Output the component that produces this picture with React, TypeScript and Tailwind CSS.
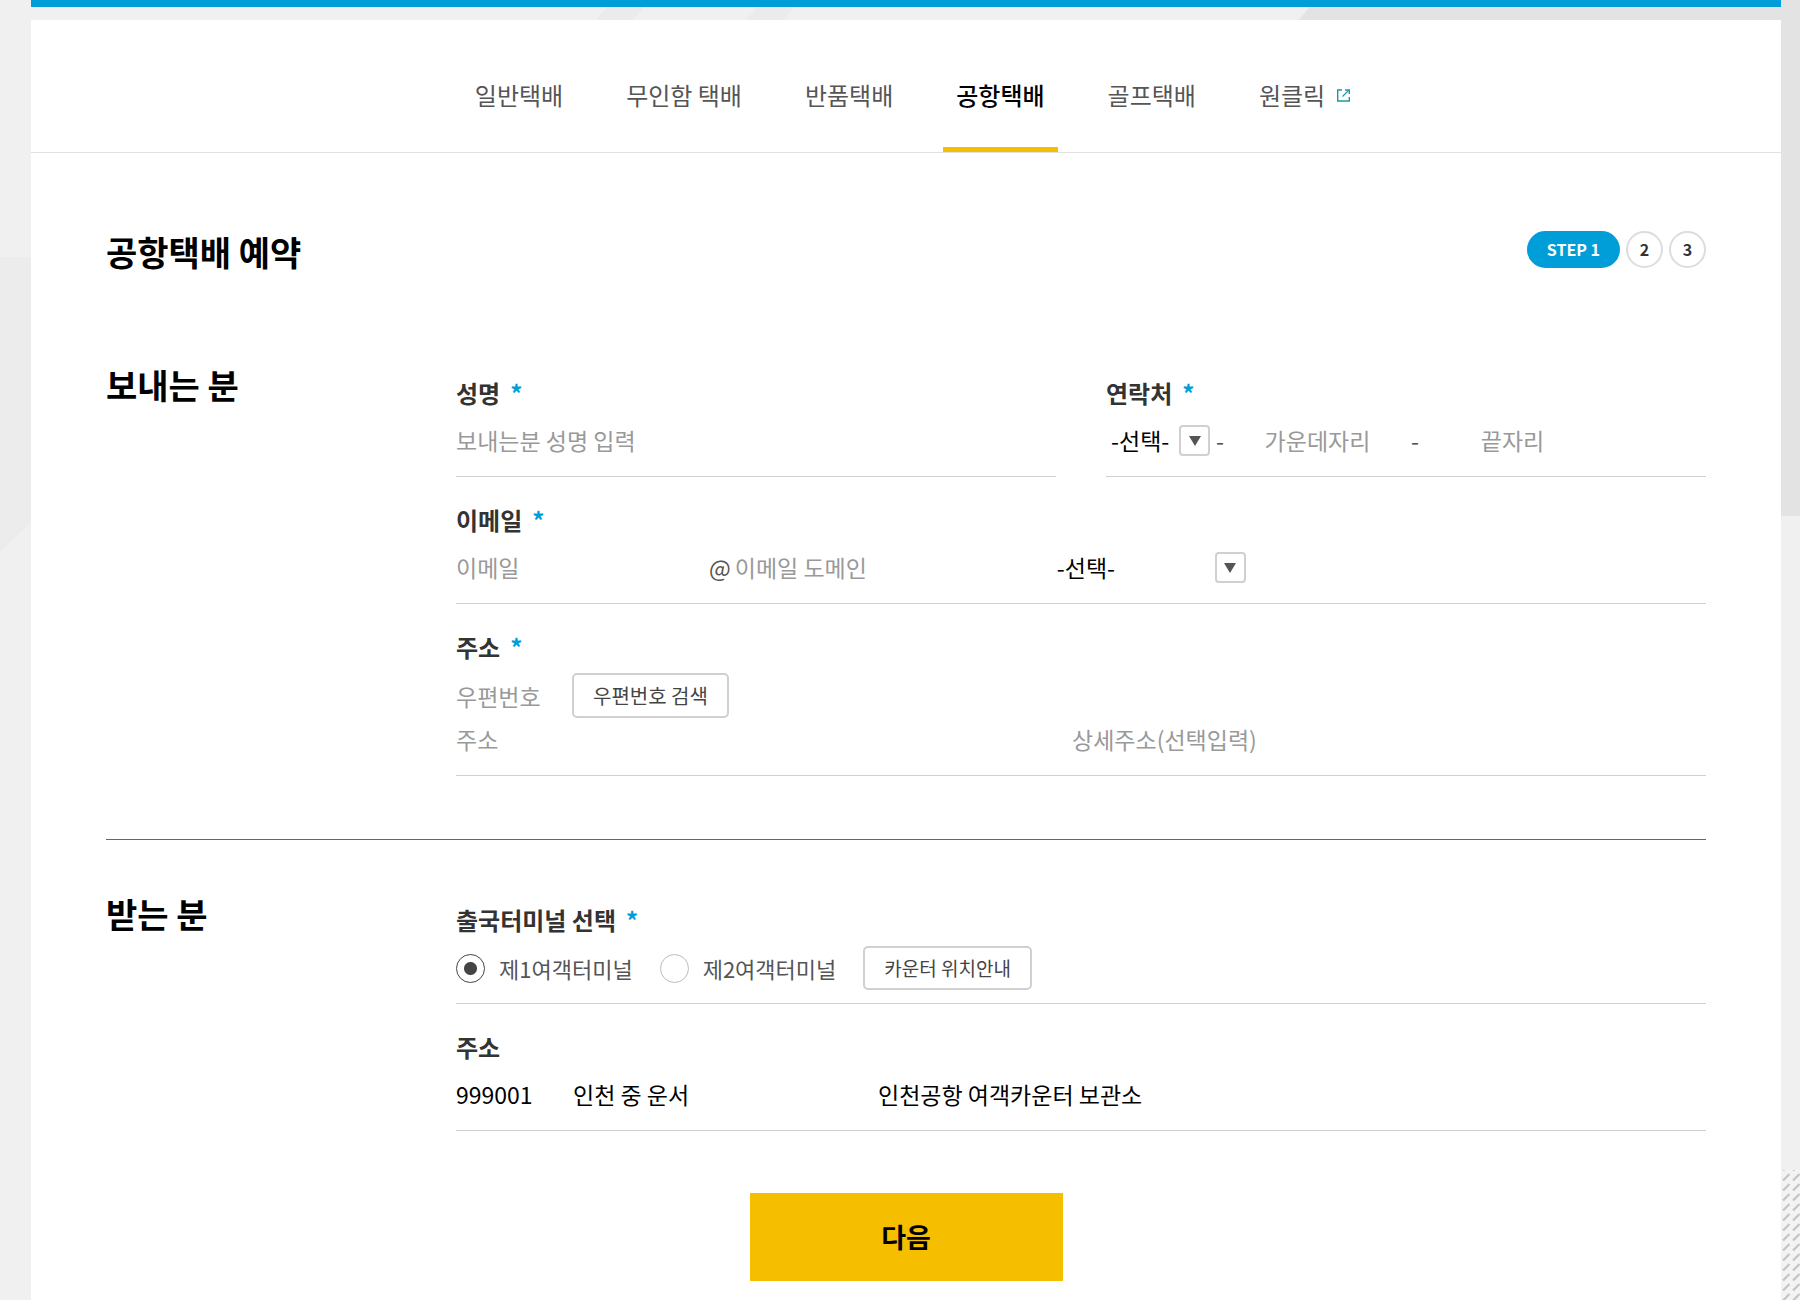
import React from 'react';

const tabs = ['일반택배', '무인함 택배', '반품택배', '공항택배', '골프택배'];

const inputClass =
  'min-w-0 bg-transparent text-[23px] leading-8 text-black placeholder:text-[#999] outline-none';

const outlineButtonClass = 'shrink-0 rounded-[5px] border-2 border-[#d0d0d0] bg-white px-[19px] text-[#444]';

const radioClass =
  'h-[29px] w-[29px] appearance-none rounded-full border border-[#bbb] checked:border-[#444] checked:bg-[radial-gradient(circle,#444_0_6px,transparent_7px)]';

const rowClass = 'border-b border-[#d0d0d0]';

const Backdrop: React.FC = () => (
  <svg className="absolute inset-0 -z-10 h-full w-full" aria-hidden="true">
    <defs>
      <pattern id="hatch" x="1781" y="1171" width="10" height="10" patternUnits="userSpaceOnUse">
        <rect width="10" height="10" fill="#f3f3f3" />
        <path d="M2 9.5 L8.5 3" stroke="#c4c4c4" strokeWidth="2.2" />
      </pattern>
    </defs>
    <path d="M0 257 H31 V522 L0 552 Z" fill="#ececec" />
    <path d="M610 4 H647 L631 22 H594 Z" fill="#ebebeb" />
    <path d="M760 4 H798 L781 22 H744 Z" fill="#ebebeb" />
    <path d="M1312 4 L1316 0 H1800 V516 H1700 V22 H1297 Z" fill="#e3e3e3" />
    <rect x="1700" y="1170" width="100" height="130" fill="url(#hatch)" />
  </svg>
);

const ExternalIcon: React.FC = () => (
  <svg className="h-[13px] w-[13px]" viewBox="0 0 13 13" fill="none" stroke="#1f98a3" aria-hidden="true">
    <path d="M5 1 H0.7 V12 H12.3 V8" strokeWidth="1.4" />
    <path d="M8 1 H12.3 V5" strokeWidth="1.4" />
    <path d="M5.5 7.5 L11.5 1.5" strokeWidth="1.1" />
  </svg>
);

const ArrowBox: React.FC = () => (
  <span className="pointer-events-none absolute right-0 top-px flex h-[31px] w-[31px] items-center justify-center rounded-[4px] border-2 border-[#d0d0d0]">
    <svg width="12" height="10" viewBox="0 0 12 10" aria-hidden="true">
      <path d="M0 0 H12 L6 10 Z" fill="#555" />
    </svg>
  </span>
);

interface FieldLabelProps {
  htmlFor: string;
  required?: boolean;
  children: React.ReactNode;
}

const FieldLabel: React.FC<FieldLabelProps> = ({ htmlFor, required, children }) => (
  <label htmlFor={htmlFor} className="block text-2xl font-bold text-[#333]">
    {children}
    {required && <span className="ml-[10px] text-[#009ed9]">*</span>}
  </label>
);

const App: React.FC = () => {
  return (
    <div className="relative isolate flex min-h-screen flex-col bg-[#f0f0f0] pl-[31px] pr-[19px] font-['Noto_Sans_CJK_KR',sans-serif]">
      <Backdrop />
      <div className="h-[7px] bg-[#009ed9]"></div>

      <div className="mt-[13px] flex-1 bg-white">
        <nav className="flex h-[133px] justify-center gap-[37px] border-b border-[#e2e2e2] text-2xl text-[#555]">
          {tabs.map((tab) => (
            <a
              key={tab}
              href="#"
              className={
                tab === '공항택배'
                  ? 'flex items-center border-y-[5px] border-t-transparent border-b-[#f5bf00] px-[13px] pt-[18px] font-medium text-black'
                  : 'flex items-center border-y-[5px] border-transparent px-[13px] pt-[18px]'
              }
            >
              {tab}
            </a>
          ))}
          <a href="#" className="flex items-center gap-3 border-y-[5px] border-transparent pl-[13px] pt-[18px]">
            원클릭
            <ExternalIcon />
          </a>
        </nav>

        <form className="px-[75px] pb-4 pt-[74px]">
          <header className="flex items-start justify-between">
            <h1 className="text-[34px] font-bold leading-[50px] text-black">공항택배 예약</h1>
            <ol className="mt-1 flex gap-[6px] text-base leading-[33px] font-bold text-[#333]">
              <li className="h-[37px] rounded-full border-2 border-[#009ed9] bg-[#009ed9] px-[18px] text-white">STEP 1</li>
              <li className="h-[37px] w-[37px] rounded-full border-2 border-[#ddd] text-center">2</li>
              <li className="h-[37px] w-[37px] rounded-full border-2 border-[#ddd] text-center">3</li>
            </ol>
          </header>

          <section className="mt-[83px] flex border-b border-[#666] pb-[63px]">
            <h2 className="w-[350px] shrink-0 text-[34px] font-bold leading-[50px] text-black">보내는 분</h2>
            <div className="min-w-0 flex-1 pt-[17px]">
              <div className="flex gap-[50px]">
                <div className={`${rowClass} h-[100px] flex-1`}>
                  <FieldLabel htmlFor="sender" required>성명</FieldLabel>
                  <input id="sender" className={`${inputClass} mt-[15px] w-full`} placeholder="보내는분 성명 입력" />
                </div>
                <div className={`${rowClass} h-[100px] flex-1`}>
                  <FieldLabel htmlFor="phone1" required>연락처</FieldLabel>
                  <div className="mt-[15px] flex items-center text-[23px] leading-8 text-[#555]">
                    <div className="relative w-[104px]">
                      <select id="phone1" className="w-full appearance-none pl-[5px] text-black outline-none">
                        <option>-선택-</option>
                      </select>
                      <ArrowBox />
                    </div>
                    <span className="ml-[6px]">-</span>
                    <input aria-label="가운데자리" className={`${inputClass} w-[187px] text-center`} placeholder="가운데자리" />
                    <span>-</span>
                    <input aria-label="끝자리" className={`${inputClass} w-[187px] text-center`} placeholder="끝자리" />
                  </div>
                </div>
              </div>

              <div className={`${rowClass} mt-[27px] h-[100px]`}>
                <FieldLabel htmlFor="email" required>이메일</FieldLabel>
                <div className="mt-[15px] flex items-center text-[23px] leading-8 text-[#555]">
                  <input id="email" className={`${inputClass} w-[253px]`} placeholder="이메일" />
                  <span>@</span>
                  <input aria-label="이메일 도메인" className={`${inputClass} ml-[4px] w-[322px]`} placeholder="이메일 도메인" />
                  <div className="relative w-[189px]">
                    <select aria-label="이메일 도메인 선택" className="w-full appearance-none text-black outline-none">
                      <option>-선택-</option>
                    </select>
                    <ArrowBox />
                  </div>
                </div>
              </div>

              <div className={`${rowClass} mt-[27px] h-[145px]`}>
                <FieldLabel htmlFor="zip" required>주소</FieldLabel>
                <div className="mt-[10px] flex items-center">
                  <input id="zip" className={`${inputClass} w-[116px]`} placeholder="우편번호" />
                  <button type="button" className={`${outlineButtonClass} h-[45px] text-xl`}>우편번호 검색</button>
                </div>
                <div className="mt-[5px] flex">
                  <input aria-label="주소" className={`${inputClass} w-[616px]`} placeholder="주소" />
                  <input aria-label="상세주소" className={`${inputClass} flex-1`} placeholder="상세주소(선택입력)" />
                </div>
              </div>
            </div>
          </section>

          <section className="mt-[49px] flex">
            <h2 className="w-[350px] shrink-0 text-[34px] font-bold leading-[50px] text-black">받는 분</h2>
            <div className="min-w-0 flex-1 pt-[15px]">
              <fieldset className={`${rowClass} h-[100px]`}>
                <legend className="text-2xl font-bold text-[#333]">
                  출국터미널 선택<span className="ml-[10px] text-[#009ed9]">*</span>
                </legend>
                <div className="mt-[10px] flex items-center text-[22px] text-[#555]">
                  <label className="flex items-center gap-[14px]">
                    <input type="radio" name="terminal" defaultChecked className={radioClass} />
                    제1여객터미널
                  </label>
                  <label className="ml-[27px] flex items-center gap-[14px]">
                    <input type="radio" name="terminal" className={radioClass} />
                    제2여객터미널
                  </label>
                  <button type="button" className={`${outlineButtonClass} ml-[27px] h-[44px] text-[19px]`}>
                    카운터 위치안내
                  </button>
                </div>
              </fieldset>

              <div className={`${rowClass} mt-[27px] h-[100px]`}>
                <FieldLabel htmlFor="destZip">주소</FieldLabel>
                <div className="mt-[15px] flex">
                  <input id="destZip" readOnly className={`${inputClass} w-[117px]`} value="999001" />
                  <input aria-label="주소" readOnly className={`${inputClass} w-[305px]`} value="인천 중 운서" />
                  <input aria-label="상세주소" readOnly className={`${inputClass} flex-1`} value="인천공항 여객카운터 보관소" />
                </div>
              </div>
            </div>
          </section>

          <div className="mt-[62px] flex justify-center">
            <button type="submit" className="h-[88px] w-[313px] bg-[#f5bf00] text-[27px] font-bold text-black">
              다음
            </button>
          </div>
        </form>
      </div>
    </div>
  );
};

export default App;
